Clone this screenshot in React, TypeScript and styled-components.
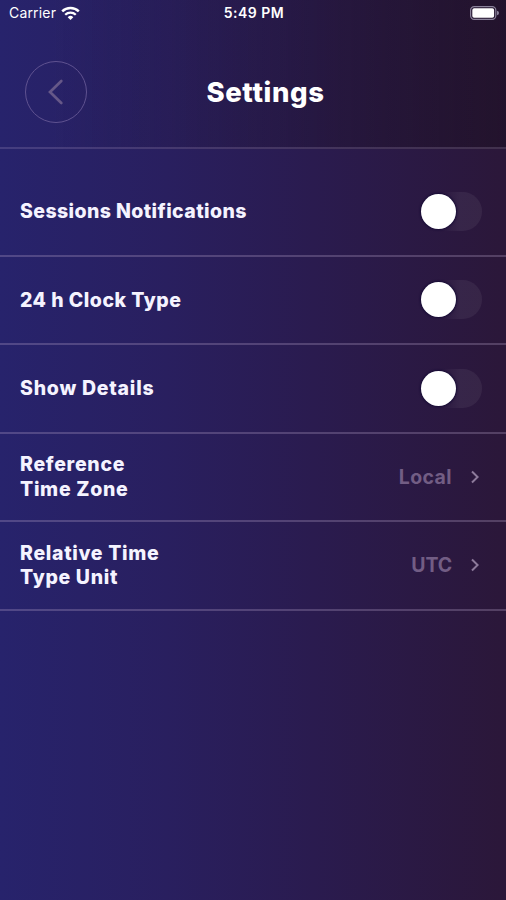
import React, { useState } from "react";
import styled, { createGlobalStyle } from "styled-components";

const GlobalStyle = createGlobalStyle`
  * { box-sizing: border-box; }
  body { margin: 0; background: #29205f; }
  button { font: inherit; color: inherit; background: none; border: 0; padding: 0; }
`;

const Screen = styled.main`
  width: 506px;
  height: 900px;
  overflow: hidden;
  display: flex;
  flex-direction: column;
  color: #fff;
  font-family: Inter, "Liberation Sans", sans-serif;
  background: linear-gradient(90deg, #27236c 0%, #291f5f 33%, #2a1b4f 62%, #2b1739 100%);
`;

const Top = styled.header`
  height: 149px;
  border-bottom: 2px solid rgba(190, 170, 210, 0.2);
  background: linear-gradient(90deg, rgba(29, 16, 36, 0) 10%, rgba(29, 16, 36, 0.22) 50%, rgba(29, 16, 36, 0.6) 100%);
`;

const StatusBar = styled.div`
  height: 26px;
  display: grid;
  grid-template-columns: 1fr auto 1fr;
  align-items: center;
  padding: 0 7px 0 9px;
  font-size: 14px;
  line-height: 18px;
`;

const Carrier = styled.div`
  display: flex;
  align-items: center;
  gap: 5px;
  letter-spacing: 0.17px;
`;

const Clock = styled.time`
  font-weight: 600;
  font-size: 14px;
  letter-spacing: 0.5px;
`;

const BatteryIcon = styled.svg`
  justify-self: end;
`;

const TitleBar = styled.div`
  height: 121px;
  display: grid;
  grid-template-columns: 62px 1fr 62px;
  align-items: center;
  padding: 11px 0 0 25px;
`;

const BackButton = styled.button`
  width: 62px;
  height: 62px;
  display: flex;
  align-items: center;
  justify-content: center;
  border: 1.4px solid #5f5290;
  border-radius: 50%;
`;

const Title = styled.h1`
  margin: 0;
  text-align: center;
  font-size: 27.5px;
  line-height: 34px;
  font-weight: 800;
  letter-spacing: 0.6px;
`;

const List = styled.div`
  padding-top: 19px;
`;

const Row = styled.div`
  height: 88.5px;
  display: flex;
  align-items: center;
  justify-content: space-between;
  padding: 0 24px 0 20px;
  border-bottom: 2.4px solid rgba(185, 165, 205, 0.29);
`;

const Label = styled.span<{ $spacing: number }>`
  font-size: 19.5px;
  line-height: 24.5px;
  font-weight: 800;
  letter-spacing: ${(p) => p.$spacing}px;
  white-space: pre-line;
  color: #f5f3ff;
`;

const Track = styled.button`
  width: 62px;
  height: 39px;
  display: flex;
  align-items: center;
  border-radius: 20px;
  background: linear-gradient(90deg, rgba(255, 255, 255, 0) 35%, rgba(255, 255, 255, 0.06) 65%);
`;

const Knob = styled.span<{ $on: boolean }>`
  width: 35px;
  height: 35px;
  margin-left: ${(p) => (p.$on ? 25 : 1)}px;
  border-radius: 50%;
  background: #fff;
  box-shadow: 0 0 2px 1px #160b35;
`;

const Choice = styled.button<{ $spacing: number }>`
  display: flex;
  align-items: center;
  gap: 19px;
  padding-right: 3px;
  color: #725d84;
  font-size: 19.5px;
  font-weight: 700;
  letter-spacing: ${(p) => p.$spacing}px;
`;

function Toggle({ label }: { label: string }) {
  const [on, setOn] = useState(false);
  return (
    <Track role="switch" aria-label={label} aria-checked={on} onClick={() => setOn(!on)}>
      <Knob $on={on} />
    </Track>
  );
}

const switches = [
  { label: "Sessions Notifications", spacing: 0.4 },
  { label: "24 h Clock Type", spacing: 0.48 },
  { label: "Show Details", spacing: 0.76 },
];

const choices = [
  { label: "Reference\nTime Zone", spacing: 0.7, value: "Local", valueSpacing: 0.4 },
  { label: "Relative Time\nType Unit", spacing: 0.68, value: "UTC", valueSpacing: -0.1 },
];

export default function App() {
  return (
    <>
      <GlobalStyle />
      <Screen>
        <Top>
          <StatusBar>
            <Carrier>
              Carrier
              <svg width="19" height="15" viewBox="0 0 19 15" fill="none" stroke="#fff">
                <path d="M1.2 5.4a12 12 0 0 1 16.6 0" strokeWidth="2.5" />
                <path d="M4.2 8.7a7.6 7.6 0 0 1 10.6 0" strokeWidth="2.3" />
                <path d="M9.5 14.1 6.7 11.2a4 4 0 0 1 5.6 0Z" fill="#fff" stroke="none" />
              </svg>
            </Carrier>
            <Clock>5:49 PM</Clock>
            <BatteryIcon width="29" height="14" viewBox="0 0 29 14">
              <rect x="0.6" y="0.6" width="25.2" height="12.8" rx="3.6" fill="none" stroke="#8b829b" strokeWidth="1.2" />
              <rect x="2.3" y="2.3" width="21.8" height="9.4" rx="1.8" fill="#fff" />
              <path d="M27 4.8q2 0.5 2 2.2t-2 2.2z" fill="#8b829b" />
            </BatteryIcon>
          </StatusBar>
          <TitleBar>
            <BackButton aria-label="Back">
              <svg width="16" height="26" viewBox="0 0 16 26" fill="none" stroke="#665888" strokeWidth="2.7" strokeLinecap="round">
                <path d="M13.3 2 2 13l11.3 11" />
              </svg>
            </BackButton>
            <Title>Settings</Title>
          </TitleBar>
        </Top>
        <List>
          {switches.map((s) => (
            <Row key={s.label}>
              <Label $spacing={s.spacing}>{s.label}</Label>
              <Toggle label={s.label} />
            </Row>
          ))}
          {choices.map((c) => (
            <Row key={c.label}>
              <Label $spacing={c.spacing}>{c.label}</Label>
              <Choice $spacing={c.valueSpacing}>
                {c.value}
                <svg width="8" height="14" viewBox="0 0 8 14" fill="none" stroke="#8d7a9b" strokeWidth="2">
                  <path d="m1 1.5 5.6 5.5L1 12.5" />
                </svg>
              </Choice>
            </Row>
          ))}
        </List>
      </Screen>
    </>
  );
}
